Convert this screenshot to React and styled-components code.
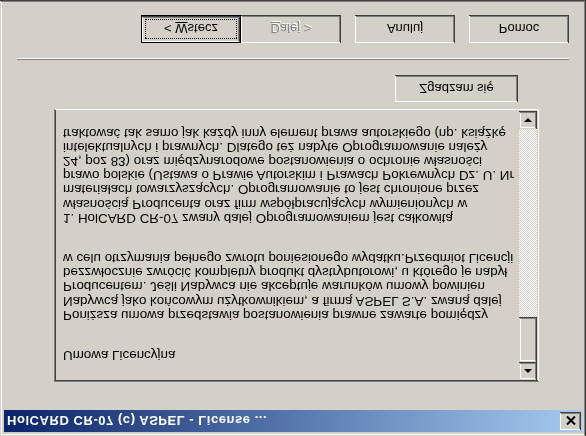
import React from "react";
import styled, { createGlobalStyle } from "styled-components";

// Win2000 palette
const FACE = "#d4d0c8";
const SHADOW = "#808080";
const DARK = "#404040";

const GlobalStyle = createGlobalStyle`
  html, body {
    margin: 0;
    padding: 0;
    background: ${FACE};
  }
  body {
    font-family: "Liberation Sans", Arial, sans-serif;
    overflow: hidden;
  }
`;

const licenseParagraphs = [
  ["Umowa Licencyjna"],
  [
    "Poniższa umowa przedstawia postanowienia prawne zawarte pomiędzy",
    "Nabywcą jako końcowym użytkownikiem, a firmą ASPEL S.A. zwaną dalej",
    "Producentem. Jeśli Nabywca nie akceptuje warunków umowy powinien",
    "bezzwłocznie zwrócić kompletny produkt dystrybutorowi, u którego je nabył",
    "w celu otrzymania pełnego zwrotu poniesionego wydatku.Przedmiot Licencji",
  ],
  [
    "1. HolCARD CR-07 zwany dalej Oprogramowaniem jest całkowitą",
    "własnością Producenta oraz firm współpracujących wymienionych w",
    "materiałach towarzyszących. Oprogramowanie to jest chronione przez",
    "prawo polskie (Ustawa o Prawie Autorskim i Prawach Pokrewnych Dz. U. Nr",
    "24, poz 83) oraz międzynarodowe postanowienia o ochronie własności",
    "intelektualnych i prawnych. Dlatego też nabyte Oprogramowanie należy",
    "traktować tak samo jak każdy inny element prawa autorskiego (np. książkę",
  ],
];

function App() {
  return (
    <>
      <GlobalStyle />
      <Flip>
        <Window>
          <TitleBar>
            <Title>HolCARD CR-07 (c) ASPEL - License ...</Title>
            <CloseButton>
              <svg width="10" height="9" viewBox="0 0 10 9">
                <path d="M1 0.5 L9 8.5 M9 0.5 L1 8.5" stroke="#000" strokeWidth="2" />
              </svg>
            </CloseButton>
          </TitleBar>

          <Content>
            <LicenseBox>
              <LicenseText>
                {licenseParagraphs.map((lines, i) => (
                  <Paragraph key={i}>
                    {lines.map((line) => (
                      <Line key={line}>{line}</Line>
                    ))}
                  </Paragraph>
                ))}
              </LicenseText>
              <ScrollBar>
                <ArrowButton>
                  <Arrow $up />
                </ArrowButton>
                <Thumb />
                <Track />
                <ArrowButton>
                  <Arrow />
                </ArrowButton>
              </ScrollBar>
            </LicenseBox>
            <AgreeRow>
              <Button $w={123} $h={27}>
                <Label>Zgadzam się</Label>
              </Button>
            </AgreeRow>
          </Content>

          <Separator />

          <ButtonRow>
            <NavGroup>
              <DefaultButton>
                <Focus>
                  <Label>
                    &lt; <u>W</u>stecz
                  </Label>
                </Focus>
              </DefaultButton>
              <Button $disabled>
                <Label>
                  <u>D</u>alej &gt;
                </Label>
              </Button>
            </NavGroup>
            <Button>
              <Label>Anuluj</Label>
            </Button>
            <Button>
              <Label>Pomoc</Label>
            </Button>
          </ButtonRow>
        </Window>
      </Flip>
    </>
  );
}

export default App;

// the whole screen is shown mirrored top to bottom
const Flip = styled.div`
  width: 586px;
  height: 436px;
  transform: scaleY(-1);
`;

const Window = styled.div`
  box-sizing: border-box;
  width: 586px;
  height: 436px;
  padding: 4px;
  background: ${FACE};
  display: flex;
  flex-direction: column;
  box-shadow: inset -1px -1px ${DARK}, inset 1px 1px ${FACE},
    inset -2px -2px ${SHADOW}, inset 2px 2px #fff;
`;

const TitleBar = styled.div`
  height: 22px;
  display: flex;
  align-items: center;
  justify-content: space-between;
  padding: 0 1px 0 3px;
  background: linear-gradient(to right, #0a246a, #a6caf0);
`;

const Title = styled.span`
  color: #fff;
  font-weight: bold;
  font-size: 13px;
  letter-spacing: 0.55px;
  white-space: nowrap;
`;

const CloseButton = styled.div`
  width: 21px;
  height: 18px;
  display: flex;
  align-items: center;
  justify-content: center;
  background: ${FACE};
  box-shadow: inset -1px -1px ${DARK}, inset 1px 1px #fff,
    inset -2px -2px ${SHADOW}, inset 2px 2px ${FACE};
`;

const Content = styled.div`
  width: 485px;
  margin: 28px 0 0 50px;
  display: flex;
  flex-direction: column;
`;

const LicenseBox = styled.div`
  box-sizing: border-box;
  height: 273px;
  padding: 2px;
  display: flex;
  background: ${FACE};
  box-shadow: inset 1px 1px ${SHADOW}, inset -1px -1px #fff,
    inset 2px 2px ${DARK}, inset -2px -2px ${FACE};
`;

const LicenseText = styled.div`
  flex: 1;
  overflow: hidden;
  padding: 18px 0 0 7px;
  font-size: 13.4px;
  line-height: 14.2px;
  color: #000;
`;

const Paragraph = styled.div`
  & + & {
    margin-top: 26px;
  }
`;

const Line = styled.div`
  white-space: nowrap;
`;

const ScrollBar = styled.div`
  width: 18px;
  display: flex;
  flex-direction: column;
`;

const raised = `
  background: ${FACE};
  box-shadow: inset -1px -1px ${DARK}, inset 1px 1px ${FACE},
    inset -2px -2px ${SHADOW}, inset 2px 2px #fff;
`;

const ArrowButton = styled.div`
  height: 18px;
  display: flex;
  align-items: center;
  justify-content: center;
  ${raised}
`;

const Arrow = styled.div`
  width: 0;
  height: 0;
  border-left: 4px solid transparent;
  border-right: 4px solid transparent;
  ${(p) => (p.$up ? "border-bottom: 4px solid #000;" : "border-top: 4px solid #000;")}
`;

const Thumb = styled.div`
  height: 45px;
  ${raised}
`;

const Track = styled.div`
  flex: 1;
  background: repeating-conic-gradient(${FACE} 0 25%, #fff 0 50%) 0 0 / 2px 2px;
`;

const AgreeRow = styled.div`
  display: flex;
  justify-content: flex-end;
  padding-right: 21px;
  margin-top: 7px;
`;

const Button = styled.div`
  box-sizing: border-box;
  width: ${(p) => p.$w || 100}px;
  height: ${(p) => p.$h || 28}px;
  display: flex;
  align-items: center;
  justify-content: center;
  font-size: 13px;
  color: ${(p) => (p.$disabled ? SHADOW : "#000")};
  text-shadow: ${(p) => (p.$disabled ? "1px 1px #fff" : "none")};
  background: ${FACE};
  box-shadow: inset -1px -1px ${DARK}, inset 1px 1px #fff,
    inset -2px -2px ${SHADOW}, inset 2px 2px ${FACE};
`;

const Label = styled.span`
  white-space: pre;
`;

const DefaultButton = styled(Button)`
  padding: 4px;
  box-shadow: inset 0 0 0 1px #000, inset -2px -2px ${DARK}, inset 2px 2px #fff,
    inset -3px -3px ${SHADOW};
`;

const Focus = styled.div`
  flex: 1;
  align-self: stretch;
  display: flex;
  align-items: center;
  justify-content: center;
  border: 1px dotted #000;
`;

const Separator = styled.div`
  margin: 15px 13px 0;
  border-top: 1px solid ${SHADOW};
  border-bottom: 1px solid #fff;
`;

const ButtonRow = styled.div`
  display: flex;
  justify-content: flex-end;
  gap: 14px;
  padding-right: 13px;
  margin-top: 15px;
`;

const NavGroup = styled.div`
  display: flex;
`;
